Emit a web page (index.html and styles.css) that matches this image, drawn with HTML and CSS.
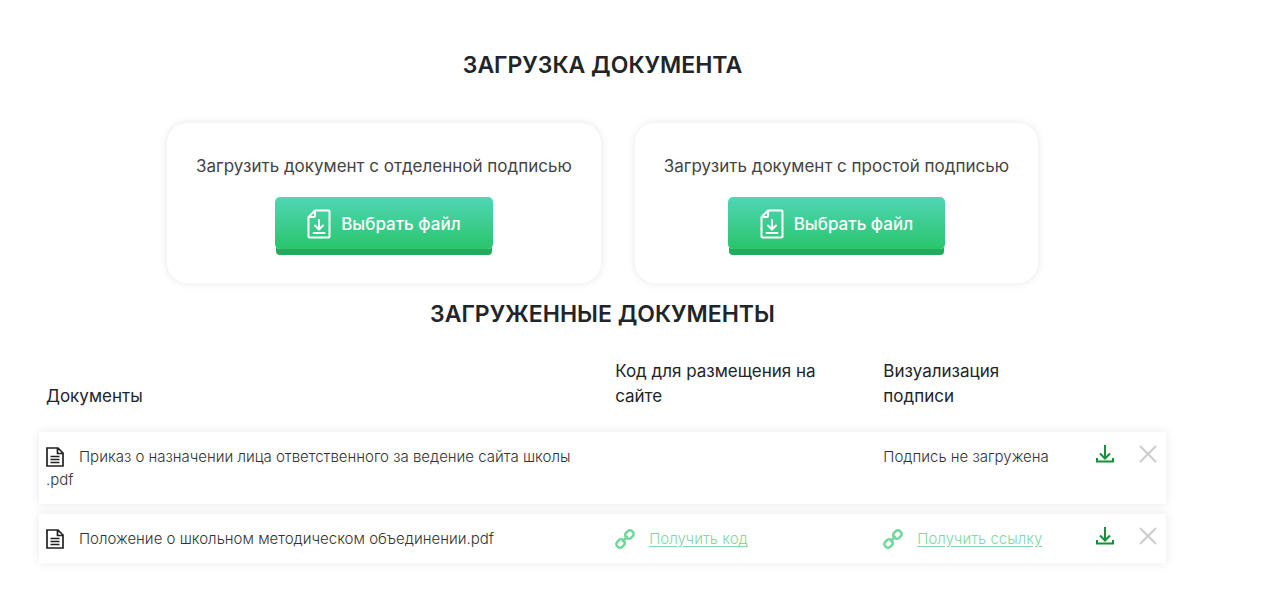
FILE: index.html
```html
<!DOCTYPE html>
<html lang="ru">
<head>
<meta charset="utf-8">
<title>Загрузка документа</title>
<link rel="stylesheet" href="styles.css">
</head>
<body>
<svg class="sprite" aria-hidden="true">
  <symbol id="upload" viewBox="0 0 24 30"><path d="M8 1.500H21.500Q22.500 1.500 22.500 2.500V27.500Q22.500 28.500 21.500 28.500H2.500Q1.500 28.500 1.500 27.500V8ZM8 1.500V7Q8 8 7 8H1.500M12 11V20M8 16.500L12 20.500L16 16.500M6.500 24H17.500"/></symbol>
  <symbol id="file" viewBox="0 0 18 20"><path d="M1 1H12L17 6V19H1ZM11.500 1V6.500H17M4.500 9.500H13.500M4.500 12.500H13.500M4.500 15.500H13.500"/></symbol>
  <symbol id="link" viewBox="0 0 20 20"><g transform="rotate(-45 10 10)"><rect x="-.5" y="6.500" width="8.500" height="7" rx="3"/><rect x="12" y="6.500" width="8.500" height="7" rx="3"/><path d="M6 10H14"/></g></symbol>
  <symbol id="download" viewBox="0 0 18 18"><path d="M9 0V13M4 8.500L9 13.500L14 8.500M1 13V16.500H17V13"/></symbol>
  <symbol id="close" viewBox="0 0 18 18"><path d="M1 1L17 17M17 1L1 17"/></symbol>
</svg>
<main class="page">
  <h1 class="title">ЗАГРУЗКА ДОКУМЕНТА</h1>
  <div class="cards">
    <section class="card">
      <p class="card-text" id="detached">Загрузить документ с отделенной подписью</p>
      <button class="choose" type="button" aria-describedby="detached"><svg class="icon-upload"><use href="#upload"/></svg>Выбрать файл</button>
    </section>
    <section class="card">
      <p class="card-text" id="simple">Загрузить документ с простой подписью</p>
      <button class="choose" type="button" aria-describedby="simple"><svg class="icon-upload"><use href="#upload"/></svg>Выбрать файл</button>
    </section>
  </div>
  <h2 class="title">ЗАГРУЖЕННЫЕ ДОКУМЕНТЫ</h2>
  <table class="docs">
    <colgroup><col class="col-name"><col class="col-code"><col class="col-sign"><col class="col-get"><col class="col-del"></colgroup>
    <thead>
      <tr><th>Документы</th><th>Код для размещения на сайте</th><th>Визуализация подписи</th><td></td><td></td></tr>
    </thead>
    <tbody>
      <tr>
        <td><svg class="icon-file"><use href="#file"/></svg>Приказ о назначении лица ответственного за ведение сайта школы .pdf</td>
        <td></td>
        <td>Подпись не загружена</td>
        <td class="action"><button class="tool get" type="button" aria-label="Скачать"><svg><use href="#download"/></svg></button></td>
        <td class="action"><button class="tool del" type="button" aria-label="Удалить"><svg><use href="#close"/></svg></button></td>
      </tr>
      <tr>
        <td><svg class="icon-file"><use href="#file"/></svg>Положение о школьном методическом объединении.pdf</td>
        <td><svg class="icon-link"><use href="#link"/></svg><a class="link" href="#">Получить код</a></td>
        <td><svg class="icon-link"><use href="#link"/></svg><a class="link" href="#">Получить ссылку</a></td>
        <td class="action"><button class="tool get" type="button" aria-label="Скачать"><svg><use href="#download"/></svg></button></td>
        <td class="action"><button class="tool del" type="button" aria-label="Удалить"><svg><use href="#close"/></svg></button></td>
      </tr>
    </tbody>
  </table>
</main>
</body>
</html>
```
FILE: styles.css
```css
* { box-sizing: border-box; }
body { margin: 0; background: #fff; color: #212529; font-family: Inter, "Liberation Sans", sans-serif; }
.sprite { position: absolute; width: 0; height: 0; }
svg { fill: none; stroke: currentColor; }
.page { padding: 50px 114px 36px 39px; }
.title { margin: 0; font-size: 23px; line-height: 30px; font-weight: 600; text-align: center; }
.cards { display: flex; justify-content: center; gap: 34px; margin: 43px 0 16px; }
.card { padding: 30px 29px 34px; border-radius: 20px; background: #fff; box-shadow: 0 0 8px rgba(0, 0, 0, .1); text-align: center; }
.card-text { margin: 0 0 18px; font-size: 17px; line-height: 26px; color: #444; }
.choose { display: inline-flex; align-items: center; gap: 10px; height: 52px; padding: 2px 32px 0; vertical-align: top; border: 0; border-radius: 5px; background: linear-gradient(#4fd6b5, #2ac56c); box-shadow: 0 7px 0 -1px #20ad5b; color: #fff; font: 500 17px/26px Inter, "Liberation Sans", sans-serif; cursor: pointer; }
.icon-upload { width: 24px; height: 30px; stroke-width: 2; stroke-linecap: round; stroke-linejoin: round; }
.docs { width: 100%; table-layout: fixed; border-collapse: separate; border-spacing: 0 10px; font-size: 15px; line-height: 23px; font-weight: 300; color: #333; margin-top: 20px; }
.col-name { width: 50.5%; }
.col-code { width: 23.8%; }
.col-sign { width: 19.5%; }
.col-get { width: 3.8%; }
.col-del { width: 2.4%; }
.docs th { padding: 0 24px 13px 7px; text-align: left; vertical-align: bottom; font-size: 17px; line-height: 25px; font-weight: 400; color: #212529; }
.docs tbody tr { background: #fff; box-shadow: 0 0 10px rgba(0, 0, 0, .09); }
.docs tbody td { padding: 13px 7px; vertical-align: top; }
.icon-file { width: 18px; height: 20px; margin-right: 15px; vertical-align: -5px; stroke: #222; stroke-width: 1.700; }
.icon-link { width: 20px; height: 20px; margin-right: 14px; vertical-align: -5px; color: #72d79c; stroke-width: 2.500; }
.link { color: #82d7a4; text-underline-offset: 2px; }
.docs tbody .action { padding: 13px 0 0; }
.tool { display: block; padding: 0; border: 0; background: none; cursor: pointer; }
.tool svg { display: block; width: 18px; height: 18px; stroke-width: 2; }
.get { color: #168f3a; }
.del { color: #ccc; }
```
